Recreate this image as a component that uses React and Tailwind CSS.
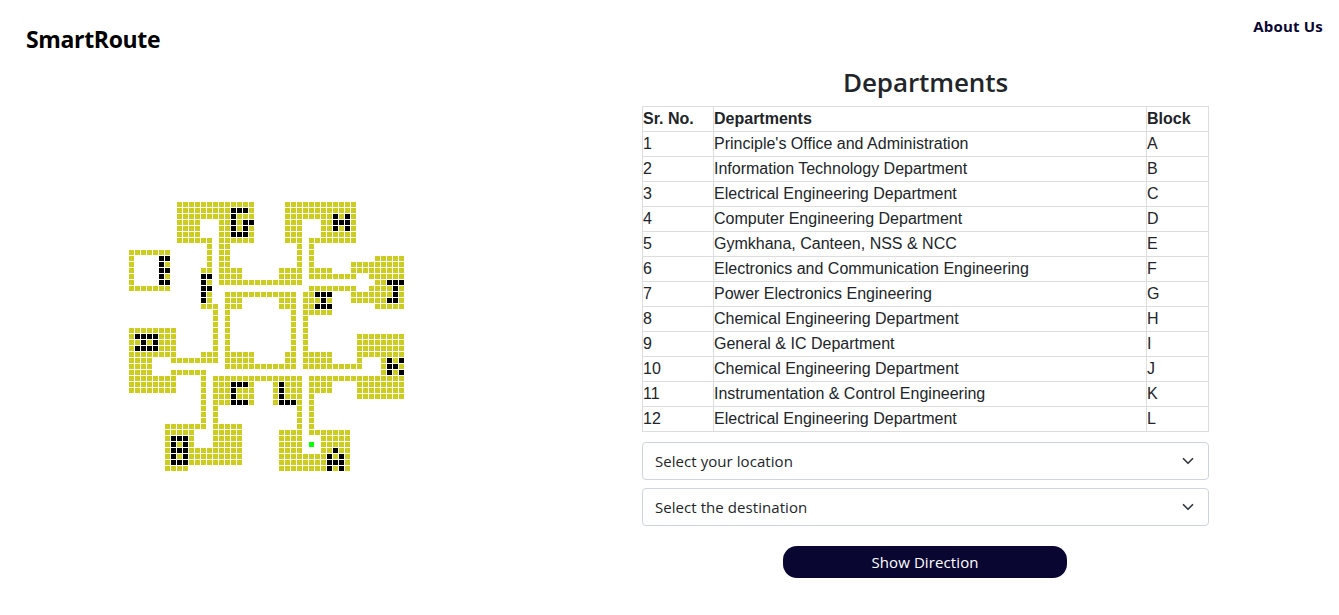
const departments = [
  ["Principle's Office and Administration", "A"],
  ["Information Technology Department", "B"],
  ["Electrical Engineering Department", "C"],
  ["Computer Engineering Department", "D"],
  ["Gymkhana, Canteen, NSS & NCC", "E"],
  ["Electronics and Communication Engineering", "F"],
  ["Power Electronics Engineering", "G"],
  ["Chemical Engineering Department", "H"],
  ["General & IC Department", "I"],
  ["Chemical Engineering Department", "J"],
  ["Instrumentation & Control Engineering", "K"],
  ["Electrical Engineering Department", "L"],
];

// One entry per map row: [wall column ranges, block-letter column ranges].
const mapRows = [
  ["8-20 26-37", ""],
  ["8-20 26-37", "17-19"],
  ["8-20 26-37", "17 34 36"],
  ["8-11 15-20 26-28 32-37", "17 19-20 34-36"],
  ["8-11 15-20 26-28 32-37", "17 19 34 36"],
  ["8-11 15-20 26-28 32-37", "17-19"],
  ["8-13 15-20 26-28 30-37", ""],
  ["13 15-16 28 30", ""],
  ["0-6 13 15-16 28 30", ""],
  ["0 13 15-16 28 30 41-45", "5-6"],
  ["0 6 13 15-16 28 30 37-45", "5"],
  ["0 12-13 15-18 25-28 30-33 37-45", "5-6"],
  ["0 6 15-18 25-28 30-37 40-45", "5 12-13"],
  ["0 13 15-28 41-42", "5-6 12 43-45"],
  ["0-6 30-37 40-45", "12-13 44"],
  ["13 16-27 29-30 37-45", "12 31-33 44"],
  ["13 16-18 25-27 29-33 37-45", "12 32 43-44"],
  ["12-14 16-18 25-27 29-30 41-45", "31-33"],
  ["14 16 27 29-33", ""],
  ["14 16 27 29", ""],
  ["14 16 27 29", ""],
  ["0-7 14 16 27 29", ""],
  ["0-7 14 16 27 29 38-45", "1-4"],
  ["0-7 14 16 27 29 38-45", "2 4"],
  ["0-7 14 16 27 29 38-45", "1-4"],
  ["0-7 12-14 16-20 26-27 29-33 38-45", ""],
  ["0-3 7-14 16-20 26-27 29-33 38 42-45", "43 45"],
  ["0-3 16-27 29-38 42-45", "43-44"],
  ["0-3 7-12 42-45", "43 45"],
  ["0-7 12 14-28 30-45", ""],
  ["0-7 12 14-20 24-28 30-33 38-45", "17-19 25"],
  ["0-7 12 14-20 24-28 30-33 38-45", "17 25"],
  ["12 14-20 24-28 30 38-45", "17 25"],
  ["12 14-20 24-28 30", "17-19 25-27"],
  ["12 14 28 30", ""],
  ["12 14 28 30", ""],
  ["12 14 28 30", ""],
  ["6-12 14-18 28 30", ""],
  ["6-10 14-18 25-28 30-36", ""],
  ["6-10 14-18 25-28 32-36", "7-9"],
  ["6-10 14-18 25-28 32-36", "7 9"],
  ["6-18 25-28 32-36", "7-9 34"],
  ["6-18 25-36", "7 9 33 35"],
  ["6-18 25-36", "7-9 33-35"],
  ["6-9 25-36", "33 35"],
];

const expand = (ranges) =>
  ranges
    .split(" ")
    .filter(Boolean)
    .flatMap((range) => {
      const [from, to = from] = range.split("-").map(Number);
      return Array.from({ length: to - from + 1 }, (_, i) => from + i);
    });

function Cell({ col, row, className }) {
  return <rect x={col * 6} y={row * 6} width="5" height="5" className={className} />;
}

function CampusMap() {
  return (
    <svg width="275" height="269" viewBox="0 0 275 269" shapeRendering="crispEdges" className="block">
      {mapRows.map(([walls, letters], row) => (
        <g key={row}>
          {expand(walls).map((col) => (
            <Cell key={"w" + col} col={col} row={row} className="fill-[#cdcc20]" />
          ))}
          {expand(letters).map((col) => (
            <Cell key={"l" + col} col={col} row={row} className="fill-black" />
          ))}
        </g>
      ))}
      <Cell col={30} row={40} className="fill-[#00ff00]" />
    </svg>
  );
}

function Select({ label }) {
  return (
    <button className="flex h-[38px] w-full items-center justify-between rounded border border-[#ced4da] px-3 text-left text-[15px] tracking-[0.06px]">
      <span>{label}</span>
      <svg viewBox="0 0 16 16" className="h-3 w-4" fill="none">
        <path
          d="M2 5l6 6 6-6"
          className="stroke-[#343a40]"
          strokeWidth="2.3"
          strokeLinecap="round"
          strokeLinejoin="round"
        />
      </svg>
    </button>
  );
}

export default function App() {
  return (
    <div className="h-[615px] w-full overflow-hidden bg-white font-['Open_Sans',sans-serif] text-[#212529]">
      <header className="flex h-[65px] items-start justify-between pr-4 pl-[26px]">
        <h1 className="pt-[23px] text-[23px] leading-[32px] font-bold tracking-[-0.35px] text-black">SmartRoute</h1>
        <a className="pt-[14px] text-[15px] leading-6 font-bold tracking-[0.2px] text-[#090632]">About Us</a>
      </header>
      <main className="flex">
        <section className="w-[642px] pt-[137px] pl-[129px]">
          <CampusMap />
        </section>
        <section className="flex w-[567px] flex-col">
          <h2 className="h-[41px] text-center text-[26px] leading-[34px] font-semibold tracking-[-0.1px]">
            Departments
          </h2>
          <table className="w-[567px] table-fixed border-collapse font-['Liberation_Sans',sans-serif] text-base leading-6">
            <colgroup>
              <col className="w-[71px]" />
              <col className="w-[433px]" />
              <col className="w-[62px]" />
            </colgroup>
            <thead>
              <tr className="text-left">
                {["Sr. No.", "Departments", "Block"].map((title) => (
                  <th key={title} className="h-[25px] border border-[#dddddd] p-0 font-bold">
                    {title}
                  </th>
                ))}
              </tr>
            </thead>
            <tbody>
              {departments.map(([name, block], i) => (
                <tr key={block}>
                  <td className="h-[25px] border border-[#dddddd] p-0">{i + 1}</td>
                  <td className="border border-[#dddddd] p-0">{name}</td>
                  <td className="border border-[#dddddd] p-0">{block}</td>
                </tr>
              ))}
            </tbody>
          </table>
          <div className="mt-[10px] flex flex-col gap-2">
            <Select label="Select your location" />
            <Select label="Select the destination" />
          </div>
          <button className="mt-5 mr-[142px] ml-[141px] h-8 rounded-[14px] bg-[#090632] text-[15px] tracking-[0.1px] text-white">
            Show Direction
          </button>
        </section>
      </main>
    </div>
  );
}
